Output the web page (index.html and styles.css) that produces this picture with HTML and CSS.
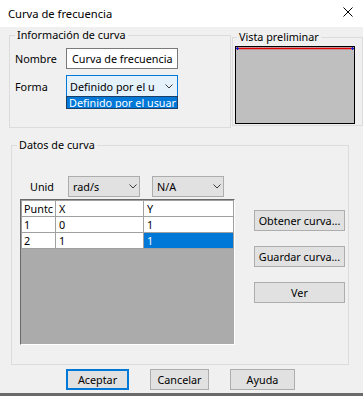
FILE: index.html
```html
<!DOCTYPE html>
<html lang="es">
<head>
<meta charset="utf-8">
<title>Curva de frecuencia</title>
<link rel="stylesheet" href="styles.css">
</head>
<body>
<div class="window">
  <div class="titlebar">
    <span class="title">Curva de frecuencia</span>
    <svg class="close" width="10" height="10" viewBox="0 0 10 10"><path d="M0.5 0.5 L9.5 9.5 M9.5 0.5 L0.5 9.5" stroke="#000" stroke-width="1" fill="none"/></svg>
  </div>
  <div class="top-row">
    <fieldset class="group info">
      <legend>Información de curva</legend>
      <div class="form-row">
        <span class="lbl">Nombre</span>
        <div class="textbox">Curva de frecuencia</div>
      </div>
      <div class="form-row">
        <span class="lbl">Forma</span>
        <div class="select-wrap">
          <div class="combo focused">
            <span class="combo-text">Definido por el u</span>
            <svg class="chev" width="8" height="5" viewBox="0 0 8 5"><polyline points="0.5,0.5 4,4 7.5,0.5" fill="none" stroke="#3c3c3c" stroke-width="1"/></svg>
          </div>
          <div class="droplist">Definido por el usuar</div>
        </div>
      </div>
    </fieldset>
    <fieldset class="group vista">
      <legend>Vista preliminar</legend>
      <div class="preview">
        <svg width="118" height="76" viewBox="0 0 118 76">
          <line x1="0" y1="1.5" x2="118" y2="1.5" stroke="#e00000" stroke-width="1.5"/>
          <path d="M0 1.5 H3 M1.5 0 V3 M115 1.5 H118 M116.5 0 V3" stroke="#1a1ad0" stroke-width="1"/>
        </svg>
      </div>
    </fieldset>
  </div>
  <fieldset class="group datos">
    <legend>Datos de curva</legend>
    <div class="units-row">
      <span class="unid">Unid</span>
      <div class="combo unit">
        <span class="combo-text">rad/s</span>
        <svg class="chev" width="8" height="5" viewBox="0 0 8 5"><polyline points="0.5,0.5 4,4 7.5,0.5" fill="none" stroke="#3c3c3c" stroke-width="1"/></svg>
      </div>
      <div class="combo unit">
        <span class="combo-text">N/A</span>
        <svg class="chev" width="8" height="5" viewBox="0 0 8 5"><polyline points="0.5,0.5 4,4 7.5,0.5" fill="none" stroke="#3c3c3c" stroke-width="1"/></svg>
      </div>
    </div>
    <div class="data-row">
      <div class="table">
        <div class="cells">
          <div class="cell c1">Puntc</div><div class="cell">X</div><div class="cell">Y</div>
          <div class="cell c1">1</div><div class="cell">0</div><div class="cell">1</div>
          <div class="cell c1">2</div><div class="cell">1</div><div class="cell sel">1</div>
        </div>
      </div>
      <div class="side">
        <div class="btn">Obtener curva...</div>
        <div class="btn">Guardar curva...</div>
        <div class="btn">Ver</div>
      </div>
    </div>
  </fieldset>
  <div class="footer">
    <div class="btn b-ok">Aceptar</div>
    <div class="btn b-cancel">Cancelar</div>
    <div class="btn b-help">Ayuda</div>
  </div>
  <div class="edge"></div>
</div>
</body>
</html>
```
FILE: styles.css
```css
* { box-sizing: border-box; }
html, body { margin: 0; padding: 0; }
body {
  width: 363px;
  height: 396px;
  overflow: hidden;
  background: #f0f0f0;
  font-family: "Noto Sans", "Open Sans", sans-serif;
  font-size: 10.8px;
  color: #000;
}
.window {
  width: 363px;
  height: 396px;
  display: flex;
  flex-direction: column;
}
.titlebar {
  height: 27px;
  flex: none;
  background: #fff;
  display: flex;
  align-items: center;
  justify-content: space-between;
  padding: 0 10px 0 8px;
}
.title { font-size: 11.2px; line-height: 14px; }
.close { align-self: flex-start; margin-top: 7px; display: block; }

.top-row { display: flex; align-items: flex-start; flex: none; }
.group {
  margin: 0;
  border: 1px solid #dcdcdc;
  min-width: 0;
}
.group legend { padding: 0 2px; line-height: 16px; }

.info {
  margin-left: 9px;
  width: 222px;
  height: 101px;
  padding: 5px 5px 0 5px;
}
.vista {
  margin-left: 1px;
  margin-top: 2px;
  width: 131px;
  height: 97px;
  padding: 1px 0 0 2px;
}
.vista legend { margin-left: 2px; }

.form-row { display: flex; align-items: center; }
.form-row + .form-row { margin-top: 6px; }
.lbl { width: 51px; flex: none; }
.textbox {
  width: 112px;
  height: 21px;
  border: 1px solid #7a7a7a;
  background: #fff;
  padding-left: 5px;
  line-height: 19px;
  white-space: nowrap;
  overflow: hidden;
}
.select-wrap { position: relative; width: 112px; height: 22px; }
.combo {
  height: 100%;
  border: 1px solid #adadad;
  background: #e1e1e1;
  display: flex;
  align-items: center;
  padding: 0 4px 0 3px;
}
.combo-text { flex: 1; overflow: hidden; white-space: nowrap; }
.chev { display: block; flex: none; }
.combo.focused { border-color: #0078d7; background: #e5f1fb; }
.droplist {
  position: absolute;
  left: 0;
  top: 21px;
  width: 112px;
  height: 13px;
  background: #0078d7;
  color: #fff;
  border: 1px solid #1b3f66;
  line-height: 11px;
  padding-left: 2px;
  overflow: hidden;
  white-space: nowrap;
}

.preview {
  width: 120px;
  height: 78px;
  background: #bfbfbf;
  border: 1px solid #000;
}
.preview svg { display: block; }

.datos {
  margin: 9px 0 0 11px;
  width: 338px;
  padding: 23px 0 19px 8px;
  flex: none;
}
.datos legend { margin-left: -3px; }
.units-row { display: flex; align-items: center; height: 21px; }
.unid { margin-left: 10px; width: 38px; flex: none; }
.unit { width: 72px; height: 21px; padding: 0 2px 0 4px; }
.unit + .unit { margin-left: 12px; }

.data-row { display: flex; align-items: flex-start; margin-top: 2px; }
.table {
  width: 215px;
  height: 146px;
  flex: none;
  border: 1px solid;
  border-color: #696969 #fff #fff #696969;
  background: #ababab;
}
.cells {
  display: grid;
  grid-template-columns: 33px 87px 89px;
  gap: 1px;
  background: #a0a0a0;
  border: 1px solid #a0a0a0;
}
.cell {
  background: #fff;
  height: 15px;
  line-height: 15px;
  padding-left: 3px;
  white-space: nowrap;
  overflow: hidden;
}
.cell.c1 { padding-left: 2px; }
.cell.sel { background: #0078d7; color: #fff; }

.side {
  margin-left: 19px;
  padding-top: 11px;
  display: flex;
  flex-direction: column;
  gap: 15px;
}
.btn {
  height: 21px;
  border: 1px solid #adadad;
  background: #e1e1e1;
  display: flex;
  align-items: center;
  justify-content: center;
  white-space: nowrap;
}
.side .btn { width: 91px; }

.footer {
  display: flex;
  gap: 21px;
  margin-top: 4px;
  padding-left: 66px;
  flex: none;
}
.b-ok {
  width: 63px;
  border-color: #0078d7;
  box-shadow: inset 0 0 0 1px #0078d7;
}
.b-cancel { width: 59px; }
.b-help { width: 65px; }

.edge {
  margin-top: auto;
  height: 3px;
  background: #6a6a6a;
  flex: none;
}
```
